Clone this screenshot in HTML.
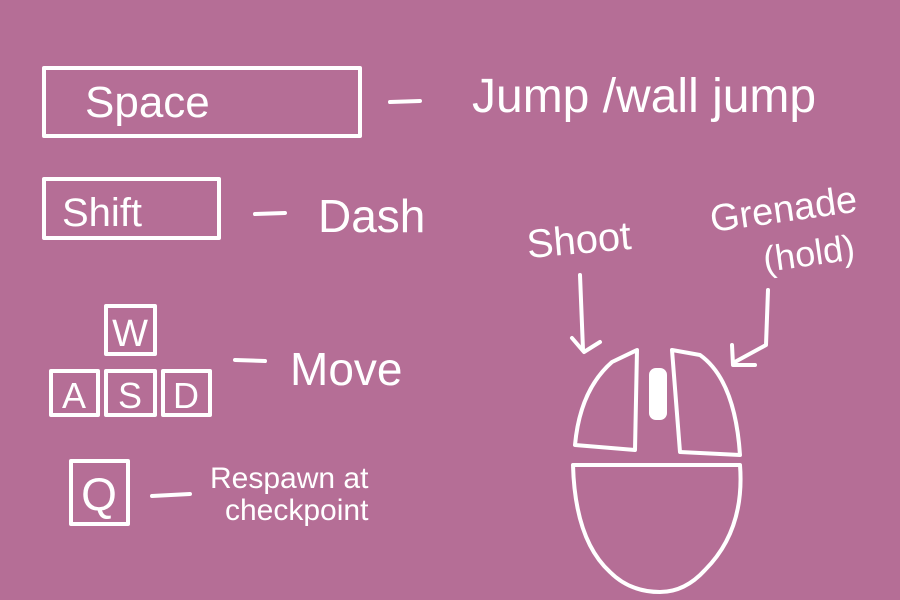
<!DOCTYPE html>
<html><head><meta charset="utf-8"><style>
html,body{margin:0;padding:0;background:#b56e96;width:900px;height:600px;overflow:hidden}
svg{display:block}
text{font-family:"Liberation Sans",sans-serif;fill:#fff}
</style></head><body>
<svg width="900" height="600" viewBox="0 0 900 600" xmlns="http://www.w3.org/2000/svg">
<rect width="900" height="600" fill="#b56e96"/>
<g fill="none" stroke="#fff" stroke-width="4" stroke-linecap="round" stroke-linejoin="round">
<rect x="44" y="68" width="316" height="68"/>
<rect x="44" y="179" width="175" height="59"/>
<rect x="106" y="306" width="49" height="48"/>
<rect x="51" y="371" width="47" height="44"/>
<rect x="106" y="371" width="49" height="44"/>
<rect x="163" y="371" width="47" height="44"/>
<rect x="71" y="461" width="57" height="63"/>
<path d="M390 102 L420 101"/>
<path d="M255 214 L285 213"/>
<path d="M235 360 L265 361"/>
<path d="M152 496 L190 494"/>
<path d="M637 350 L612 362 Q580 390 575 445 L635 450 Z"/>
<path d="M672 350 L700 355 Q735 380 740 455 L680 452 Z"/>
<rect x="651" y="370" width="14" height="48" rx="5" fill="#fff"/>
<path d="M573 465 L740 465 Q745 530 705 570 Q685 592 660 592 Q630 592 610 572 Q575 540 573 465 Z"/>
<path d="M580 275 L583 350"/>
<path d="M572 338 L584 352 L600 342"/>
<path d="M768 290 L766 345 L733 363"/>
<path d="M732 345 L733 365 L755 365"/>
</g>
<text x="85" y="117" font-size="44">Space</text>
<text x="62" y="226" font-size="40">Shift</text>
<g text-anchor="middle">
<text x="130" y="346" font-size="38">W</text>
<text x="74" y="408" font-size="36">A</text>
<text x="130" y="408" font-size="36">S</text>
<text x="186" y="408" font-size="36">D</text>
<text x="99" y="510" font-size="46">Q</text>
</g>
<text x="472" y="112" font-size="48">Jump /wall jump</text>
<text x="318" y="232" font-size="46">Dash</text>
<text x="290" y="385" font-size="46">Move</text>
<text x="210" y="488" font-size="30">Respawn at</text>
<text x="225" y="520" font-size="30">checkpoint</text>
<text x="528" y="258" font-size="40" transform="rotate(-5 528 258)">Shoot</text>
<text x="712" y="232" font-size="38" transform="rotate(-8 712 232)">Grenade</text>
<text x="765" y="272" font-size="36" transform="rotate(-8 765 272)">(hold)</text>
</svg>
</body></html>
